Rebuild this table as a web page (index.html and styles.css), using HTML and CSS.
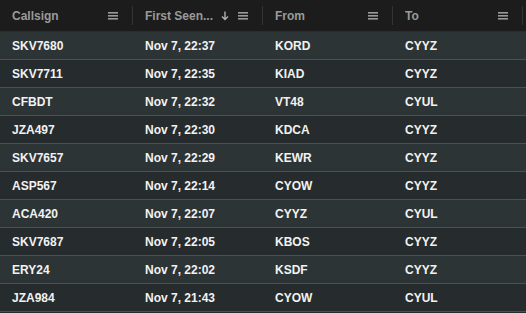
FILE: index.html
```html
<!DOCTYPE html>
<html>
<head>
<meta charset="utf-8">
<link rel="stylesheet" href="styles.css">
</head>
<body>
<div class="grid">
  <div class="header">
    <div class="hcell c1"><span class="label">Callsign</span><span class="menu"><svg width="10" height="8" viewBox="0 0 10 8"><rect y="0" width="10" height="1.6"/><rect y="3" width="10" height="1.6"/><rect y="6" width="10" height="1.6"/></svg></span><span class="sep"></span></div>
    <div class="hcell"><span class="label">First Seen...</span><span class="sort"><svg width="8" height="10" viewBox="0 0 8 10"><path d="M4 0.5V8.5M1 5.5L4 8.5L7 5.5" fill="none" stroke="currentColor" stroke-width="1.4"/></svg></span><span class="menu"><svg width="10" height="8" viewBox="0 0 10 8"><rect y="0" width="10" height="1.6"/><rect y="3" width="10" height="1.6"/><rect y="6" width="10" height="1.6"/></svg></span><span class="sep"></span></div>
    <div class="hcell"><span class="label">From</span><span class="menu"><svg width="10" height="8" viewBox="0 0 10 8"><rect y="0" width="10" height="1.6"/><rect y="3" width="10" height="1.6"/><rect y="6" width="10" height="1.6"/></svg></span><span class="sep"></span></div>
    <div class="hcell"><span class="label">To</span><span class="menu"><svg width="10" height="8" viewBox="0 0 10 8"><rect y="0" width="10" height="1.6"/><rect y="3" width="10" height="1.6"/><rect y="6" width="10" height="1.6"/></svg></span><span class="sep"></span></div>
  </div>
  <div class="row"><div class="cell c1">SKV7680</div><div class="cell">Nov 7, 22:37</div><div class="cell">KORD</div><div class="cell">CYYZ</div></div>
  <div class="row"><div class="cell c1">SKV7711</div><div class="cell">Nov 7, 22:35</div><div class="cell">KIAD</div><div class="cell">CYYZ</div></div>
  <div class="row"><div class="cell c1">CFBDT</div><div class="cell">Nov 7, 22:32</div><div class="cell">VT48</div><div class="cell">CYUL</div></div>
  <div class="row"><div class="cell c1">JZA497</div><div class="cell">Nov 7, 22:30</div><div class="cell">KDCA</div><div class="cell">CYYZ</div></div>
  <div class="row"><div class="cell c1">SKV7657</div><div class="cell">Nov 7, 22:29</div><div class="cell">KEWR</div><div class="cell">CYYZ</div></div>
  <div class="row"><div class="cell c1">ASP567</div><div class="cell">Nov 7, 22:14</div><div class="cell">CYOW</div><div class="cell">CYYZ</div></div>
  <div class="row"><div class="cell c1">ACA420</div><div class="cell">Nov 7, 22:07</div><div class="cell">CYYZ</div><div class="cell">CYUL</div></div>
  <div class="row"><div class="cell c1">SKV7687</div><div class="cell">Nov 7, 22:05</div><div class="cell">KBOS</div><div class="cell">CYYZ</div></div>
  <div class="row"><div class="cell c1">ERY24</div><div class="cell">Nov 7, 22:02</div><div class="cell">KSDF</div><div class="cell">CYYZ</div></div>
  <div class="row"><div class="cell c1">JZA984</div><div class="cell">Nov 7, 21:43</div><div class="cell">CYOW</div><div class="cell">CYUL</div></div>
</div>
</body>
</html>
```
FILE: styles.css
```css
html, body {
  margin: 0;
  padding: 0;
  background: #262b2d;
}
body {
  width: 526px;
  height: 313px;
  overflow: hidden;
  font-family: "Liberation Sans", Arial, sans-serif;
  font-size: 12px;
  font-weight: bold;
}
.grid {
  width: 526px;
}
.header {
  display: flex;
  height: 31px;
  background: #1c1c1c;
  border-bottom: 1px solid #2a2e30;
  color: #9a9a9a;
}
.hcell {
  width: 130px;
  flex: none;
  display: flex;
  align-items: center;
  padding-left: 12px;
  box-sizing: border-box;
  position: relative;
}
.hcell.c1 {
  width: 133px;
}
.label {
  flex: 1;
  white-space: nowrap;
  overflow: hidden;
}
.sort {
  display: flex;
  color: #b0b0b0;
  margin-right: 9px;
}
.menu {
  display: flex;
  margin-right: 15px;
  fill: #9a9a9a;
}
.sep {
  position: absolute;
  right: 0;
  top: 6px;
  width: 1px;
  height: 19px;
  background: #333;
}
.row {
  display: flex;
  height: 27px;
  border-bottom: 1px solid #4b5153;
  background: #2d3436;
  color: #f2f2f2;
}
.row:nth-child(odd) {
  background: #262b2d;
}
.cell {
  width: 130px;
  flex: none;
  box-sizing: border-box;
  padding-left: 12px;
  display: flex;
  align-items: center;
  white-space: nowrap;
}
.cell.c1 {
  width: 133px;
}
```
